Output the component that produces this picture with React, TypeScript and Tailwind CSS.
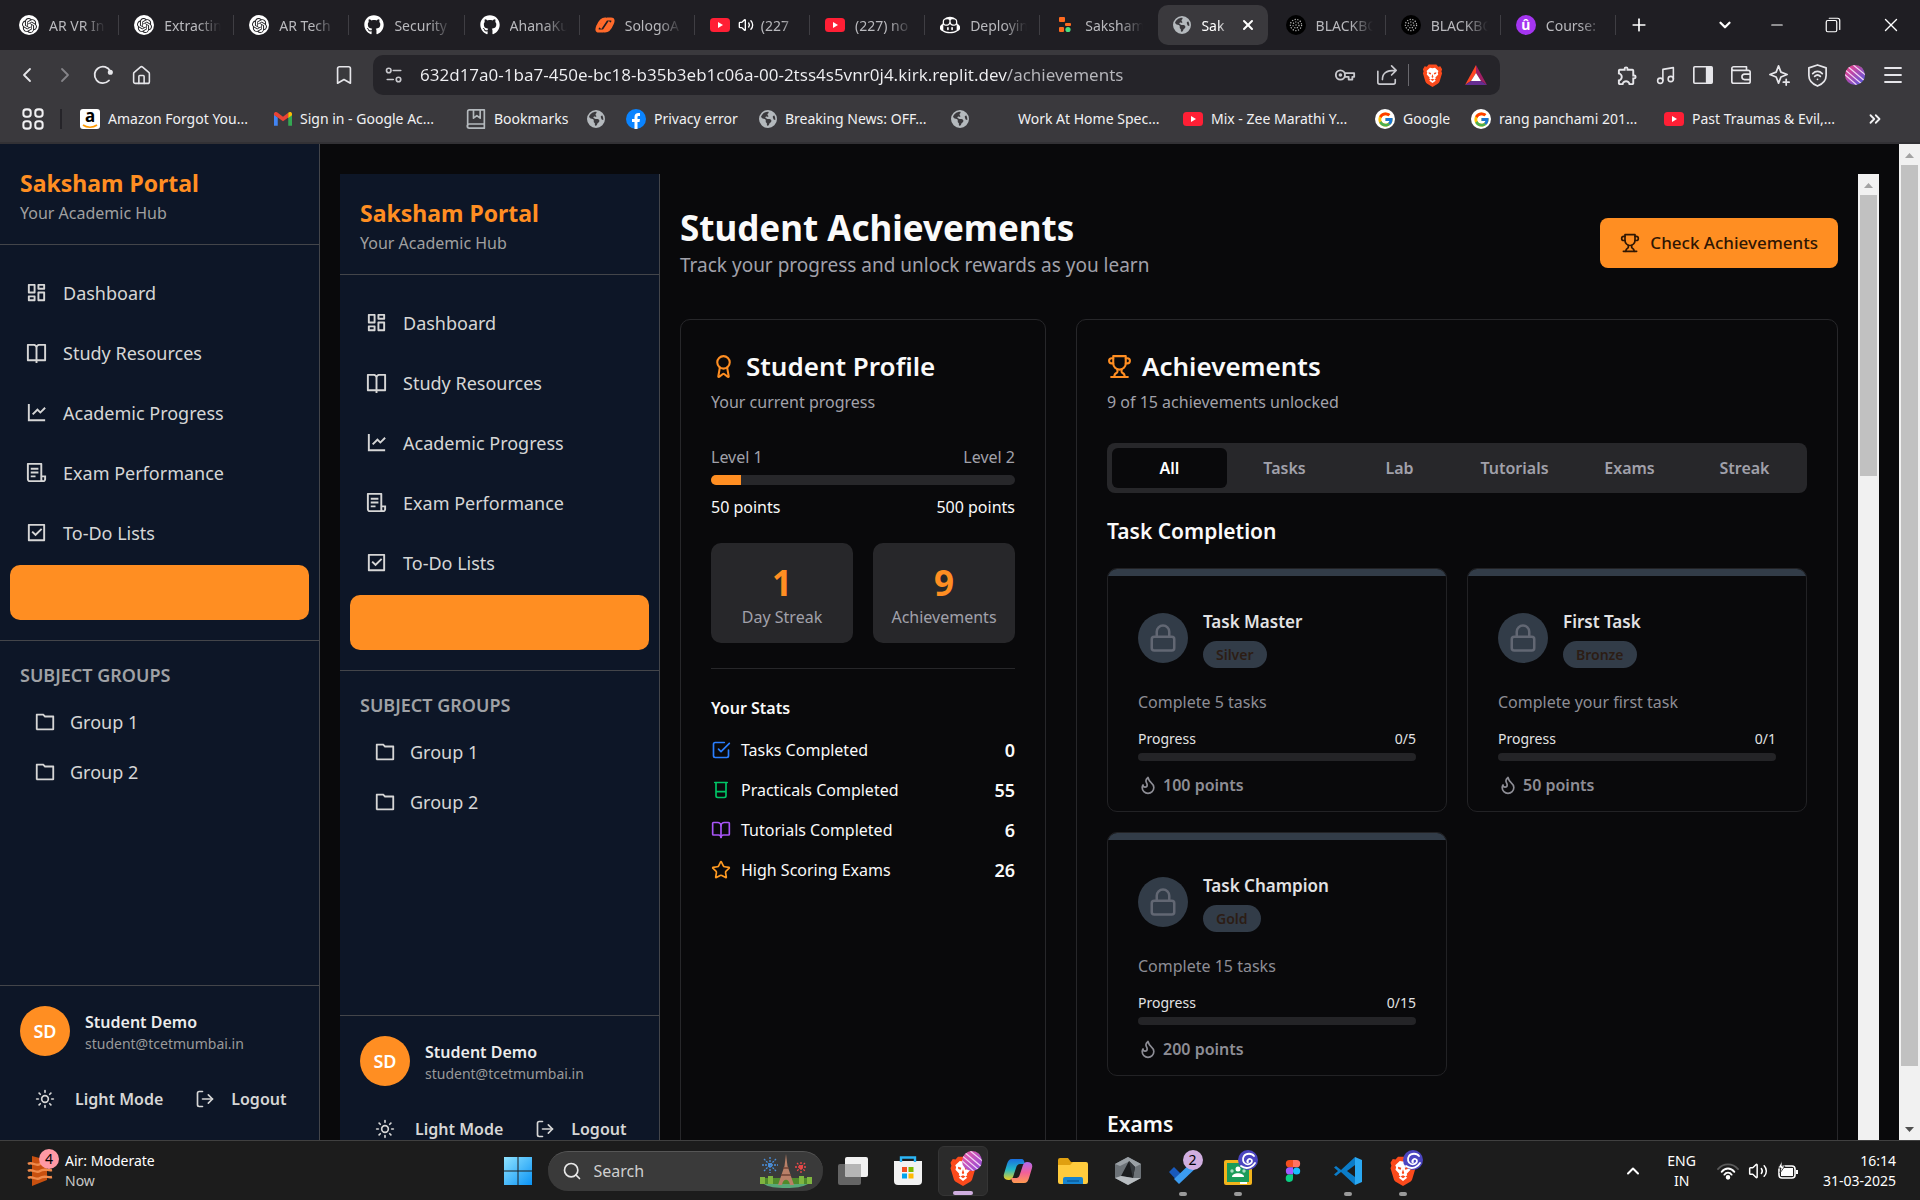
import React, { type ReactNode } from "react";
import { RiDashboardLine, RiBookOpenLine, RiLineChartLine, RiFileList3Line, RiCheckboxLine, RiFolderLine } from "react-icons/ri";
import { FaGithub, FaEarthAmericas } from "react-icons/fa6";
import { SiOpenai, SiGithubcopilot } from "react-icons/si";
import { FcGoogle } from "react-icons/fc";
import { MdOutlineExtension } from "react-icons/md";
import {
  Award, BookOpen, Star, Flame, Lock, Sun, LogOut, ChevronLeft, ChevronRight, ChevronDown, ChevronUp, ChevronsRight,
  Plus, X, Minus, Music, Menu, Search, Volume2, Bookmark, House,
} from "lucide-react";

/* ---------- shared drawings ---------- */

function Stroke({ size, className, width = 2, children }: { size: number; className?: string; width?: number; children: ReactNode }) {
  return (
    <svg width={size} height={size} viewBox="0 0 24 24" fill="none" stroke="currentColor" strokeWidth={width} strokeLinecap="round" strokeLinejoin="round" className={className} aria-hidden="true">
      {children}
    </svg>
  );
}

function TrophyIcon({ size, className }: { size: number; className?: string }) {
  return (
    <Stroke size={size} className={className}>
      <path d="M6 9H4.5a2.5 2.5 0 0 1 0-5H6" />
      <path d="M18 9h1.5a2.5 2.5 0 0 0 0-5H18" />
      <path d="M4 22h16" />
      <path d="M10 14.66V17c0 .55-.47.98-.97 1.21C7.85 18.75 7 20.24 7 22" />
      <path d="M14 14.66V17c0 .55.47.98.97 1.21C16.15 18.75 17 20.24 17 22" />
      <path d="M18 2H6v7a6 6 0 0 0 12 0V2Z" />
    </Stroke>
  );
}

function YouTubeIcon() {
  return (
    <svg width="20" height="20" viewBox="0 0 20 20" aria-hidden="true">
      <rect x="0" y="3" width="20" height="14" rx="3.5" fill="#ff1f35" />
      <path d="M8 7l5 3-5 3z" fill="#fff" />
    </svg>
  );
}

function ChatGptIcon() {
  return (
    <span className="flex size-5 items-center justify-center rounded-full bg-white text-[#202024]">
      <SiOpenai size={15} />
    </span>
  );
}

function BlackboxIcon() {
  return (
    <svg width="20" height="20" viewBox="0 0 20 20" aria-hidden="true">
      <circle cx="10" cy="10" r="10" fill="#000" />
      <circle cx="10" cy="10" r="5.6" fill="none" stroke="#bbb" strokeWidth="1.2" strokeDasharray="1.2 1.5" />
      <circle cx="10" cy="10" r="3" fill="none" stroke="#bbb" strokeWidth="1.2" strokeDasharray="1.2 1.4" />
      <circle cx="10" cy="10" r=".7" fill="#bbb" />
    </svg>
  );
}

function BraveLion({ size }: { size: number }) {
  return (
    <svg width={size} height={size} viewBox="0 0 24 24" aria-hidden="true">
      <path d="M8 .5h8l2 2.3 2.2-.4 1.8 3-.7 2.3.7 2-2.6 8.6c-.3 1-1 1.8-1.9 2.4L12 24l-5.500-3.300c-.9-.6-1.6-1.4-1.9-2.4L2 9.700l.7-2L2 5.400l1.800-3 2.200.4z" fill="#fb4a1c" />
      <path d="M12 4.400l2.600-.5 3.600 3.400-.7 1.600.5 2-3 3.200.4 1.200-1.400 1 1.400 1.100L12 19.900l-3.400-2.500 1.400-1.100-1.400-1 .4-1.200-3-3.200.5-2-.7-1.600 3.600-3.400z" fill="#fff" />
      <path d="M8 8.600l2.600.8-.4 1.500-2-.6zM16 8.600l-2.600.8.4 1.500 2-.6zM12 10.500l1 3-1 1-1-1zM10 16.300l2-.9 2 .9-2 1.500z" fill="#fb4a1c" />
    </svg>
  );
}

function StripedBall({ size, a, b, id }: { size: number; a: string; b: string; id: string }) {
  return (
    <svg width={size} height={size} viewBox="0 0 20 20" aria-hidden="true">
      <defs>
        <linearGradient id={id} x1="0" y1="0" x2="1" y2="1">
          <stop offset="0" stopColor={a} />
          <stop offset="1" stopColor={b} />
        </linearGradient>
        <clipPath id={id + "c"}><circle cx="10" cy="10" r="10" /></clipPath>
      </defs>
      <circle cx="10" cy="10" r="10" fill={`url(#${id})`} />
      <g clipPath={`url(#${id}c)`} stroke="#f3d5f5" strokeWidth="1.2">
        <path d="M-2 8l16 14M-2 3l20 17M1 0l20 17M7-1l16 13M13-1l10 8" />
      </g>
    </svg>
  );
}

function SwirlBall() {
  return (
    <svg width="20" height="20" viewBox="0 0 20 20" aria-hidden="true">
      <circle cx="10" cy="10" r="10" fill="#4b45c0" />
      <path d="M10 10c1-2 4-1 4 1s-3 4-6 3-4-5-2-8 8-3 10 0M3 16c4 3 10 3 14-3M10 10c-1 1-1 2 0 2" fill="none" stroke="#fff" strokeWidth="1.8" strokeLinecap="round" />
    </svg>
  );
}

function Globe() {
  return <FaEarthAmericas size={18} className="text-[#b4b9bd]" />;
}

/* ---------- browser window ---------- */

type Tab = { title: string; icon: ReactNode; active?: boolean; sound?: boolean };

const TABS: Tab[] = [
  { title: "AR VR In", icon: <ChatGptIcon /> },
  { title: "Extractin", icon: <ChatGptIcon /> },
  { title: "AR Tech", icon: <ChatGptIcon /> },
  { title: "Security", icon: <FaGithub size={20} className="text-white" /> },
  { title: "AhanaKu", icon: <FaGithub size={20} className="text-white" /> },
  {
    title: "SologoA",
    icon: (
      <svg width="20" height="20" viewBox="0 0 20 20" fill="none" stroke="#ff6a2b" strokeWidth="3.2" strokeLinejoin="round" aria-hidden="true">
        <path d="M8 16H4c-3 0-2-3-1-5 2-5 4-7 7-7h1L5 13" />
        <path d="M12 4h4c3 0 2 3 1 5-2 5-4 7-7 7H9l6-9" />
      </svg>
    ),
  },
  { title: "(227", icon: <YouTubeIcon />, sound: true },
  { title: "(227) no", icon: <YouTubeIcon /> },
  { title: "Deployin", icon: <SiGithubcopilot size={20} className="text-white" /> },
  {
    title: "Saksham",
    icon: (
      <svg width="20" height="20" viewBox="0 0 20 20" aria-hidden="true">
        <rect x="4" y="2" width="6" height="5" rx="1" fill="#ff6a1f" />
        <rect x="10" y="8" width="6" height="3" rx="1" fill="#ff6a1f" />
        <rect x="4" y="12" width="5" height="5" rx="1" fill="#ff6a1f" />
        <circle cx="13" cy="14.500" r="2.600" fill="#4ade80" />
      </svg>
    ),
  },
  { title: "Sak", icon: <Globe />, active: true },
  { title: "BLACKBO", icon: <BlackboxIcon /> },
  { title: "BLACKBO", icon: <BlackboxIcon /> },
  {
    title: "Course:",
    icon: <span className="flex size-5 items-center justify-center rounded-full bg-[#a435f0] text-[14px] font-bold leading-none text-white">û</span>,
  },
];

function TabStrip() {
  return (
    <div className="flex h-[50px] items-center bg-[#1f1e23] pl-1">
      <div className="flex min-w-0 flex-1 items-center" role="tablist">
        {TABS.map((t, i) => (
          <div key={i} className="flex min-w-0 flex-1 items-center">
            <button
              role="tab"
              aria-selected={!!t.active}
              className={
                t.active
                  ? "mx-[3px] flex h-10 min-w-0 flex-1 items-center rounded-[10px] bg-[#3a393d] pl-[15px] pr-3 text-white"
                  : "flex h-10 min-w-0 flex-1 items-center pl-[15px] pr-3 text-[#b9b9bd]"
              }
            >
              <span className="shrink-0">{t.icon}</span>
              {t.sound && <Volume2 size={16} className="ml-2 shrink-0 text-white" />}
              <span
                className={
                  t.sound
                    ? "ml-[7px] min-w-0 flex-1 overflow-hidden whitespace-nowrap text-left text-[14px] [mask-image:linear-gradient(to_right,black_60%,transparent)]"
                    : "ml-[10px] min-w-0 flex-1 overflow-hidden whitespace-nowrap text-left text-[14px] [mask-image:linear-gradient(to_right,black_60%,transparent)]"
                }
              >
                {t.title}
              </span>
              {t.active && <X size={16} strokeWidth={3} className="ml-[10px] shrink-0" />}
            </button>
            {!t.active && i !== 9 && <span className="h-5 w-px shrink-0 bg-[#3f3e43]" />}
          </div>
        ))}
      </div>
      <div className="flex w-[304px] shrink-0 items-center text-white">
        <button aria-label="New tab" className="flex w-[46px] justify-center"><Plus size={20} /></button>
        <span className="flex-1" />
        <button aria-label="Search tabs" className="flex w-[50px] justify-center"><ChevronDown size={18} strokeWidth={3} /></button>
        <button aria-label="Minimise" className="flex w-[54px] justify-center"><Minus size={18} strokeWidth={1.5} /></button>
        <button aria-label="Restore" className="flex w-[58px] justify-center">
          <Stroke size={18} width={1.6}>
            <rect x="3" y="6" width="14" height="15" rx="2" />
            <path d="M7 3h11a3 3 0 0 1 3 3v12" />
          </Stroke>
        </button>
        <button aria-label="Close" className="flex w-[58px] justify-center"><X size={22} strokeWidth={1.5} /></button>
      </div>
    </div>
  );
}

function ToolButton({ label, children }: { label: string; children: ReactNode }) {
  return <button aria-label={label} className="flex w-[38px] shrink-0 items-center justify-center">{children}</button>;
}

function Toolbar() {
  return (
    <div className="flex h-[50px] items-center bg-[#3a393d] pl-2 text-[#e6e6ea]">
      <ToolButton label="Back"><ChevronLeft size={24} strokeWidth={1.8} /></ToolButton>
      <ToolButton label="Forward"><ChevronRight size={24} strokeWidth={1.8} className="text-[#858489]" /></ToolButton>
      <ToolButton label="Reload">
        <Stroke size={22}>
          <path d="M18.500 18A9 9 0 1 1 20 8" />
          <circle cx="20" cy="9" r="1.800" fill="currentColor" />
        </Stroke>
      </ToolButton>
      <ToolButton label="Home"><House size={21} strokeWidth={1.8} /></ToolButton>
      <span className="w-[165px]" />
      <ToolButton label="Bookmark this tab"><Bookmark size={22} strokeWidth={1.8} /></ToolButton>
      <div className="ml-[10px] flex h-10 min-w-0 flex-1 items-center rounded-[10px] bg-[#252429] px-3">
        <Stroke size={18} className="shrink-0 text-[#c9c9ce]" width={2.2}>
          <circle cx="5" cy="6" r="3" />
          <path d="M11 6h10M3 18h8" />
          <circle cx="18" cy="18" r="3" />
        </Stroke>
        <input
          aria-label="Address"
          defaultValue="632d17a0-1ba7-450e-bc18-b35b3eb1c06a-00-2tss4s5vnr0j4.kirk.replit.dev/achievements"
          className="ml-[17px] min-w-0 flex-1 bg-[linear-gradient(to_right,#f0f0f3_587px,#b8b8bd_587px)] bg-clip-text text-[17px] leading-6 text-transparent outline-none"
        />
        <button aria-label="Passwords" className="text-[#c9c9ce]">
          <Stroke size={22}>
            <circle cx="7" cy="12" r="5" />
            <circle cx="7" cy="12" r="1" />
            <path d="M12 10h10v4h-2v3h-4v-3h-4" />
          </Stroke>
        </button>
        <button aria-label="Share" className="ml-5 text-[#c9c9ce]">
          <Stroke size={22} width={1.8}>
            <path d="M2 8v12a2 2 0 0 0 2 2h15a2 2 0 0 0 2-2v-3M7 17c0-7 4-10 14-10M17 2l5 5-5 5" />
          </Stroke>
        </button>
        <span className="ml-[10px] h-[22px] w-px bg-[#6a696e]" />
        <button aria-label="Shields" className="ml-3"><BraveLion size={23} /></button>
        <button aria-label="Rewards" className="ml-5">
          <svg width="24" height="24" viewBox="0 0 24 24" aria-hidden="true">
            <path d="M12 2L1 22l6-4 5-8z" fill="#ff4724" />
            <path d="M12 2l11 20-6-4-5-8z" fill="#9e1f63" />
            <path d="M1 22h22l-6-4H7z" fill="#662d91" />
            <path d="M12 10l5 8H7z" fill="#fff" />
          </svg>
        </button>
      </div>
      <span className="w-[108px]" />
      <ToolButton label="Extensions"><MdOutlineExtension size={23} /></ToolButton>
      <ToolButton label="Media"><Music size={21} strokeWidth={1.8} /></ToolButton>
      <ToolButton label="Sidebar">
        <Stroke size={22} width={1.8}>
          <rect x="2" y="3" width="20" height="18" rx="1" />
          <path d="M16 4h5v16h-5z" fill="currentColor" />
        </Stroke>
      </ToolButton>
      <ToolButton label="Wallet">
        <Stroke size={22} width={1.8}>
          <path d="M2 5a2 2 0 0 1 2-2h14v4H4a2 2 0 0 1-2-2v14a2 2 0 0 0 2 2h16a2 2 0 0 0 2-2v-2M22 11V9a2 2 0 0 0-2-2h-2M22 11h-6a3 3 0 0 0 0 6h6z" />
        </Stroke>
      </ToolButton>
      <ToolButton label="Assistant">
        <Stroke size={23} width={1.8}>
          <path d="M11 2l2.500 6.500L20 11l-6.500 2.500L11 20l-2.500-6.500L2 11l6.500-2.500zM19 16v6M16 19h6" />
        </Stroke>
      </ToolButton>
      <ToolButton label="VPN">
        <Stroke size={23} width={1.8}>
          <path d="M12 1l9 3v8c0 6-4 9-9 11-5-2-9-5-9-11V4zM7 10c3-3 7-3 10 0M9 13c2-2 4-2 6 0M12 16v0" />
        </Stroke>
      </ToolButton>
      <ToolButton label="Profile"><StripedBall id="profile" size={20} a="#ff3d81" b="#4a5be8" /></ToolButton>
      <ToolButton label="Menu"><Menu size={24} strokeWidth={1.8} /></ToolButton>
      <span className="w-2 shrink-0" />
    </div>
  );
}

const GoogleBadge = () => (
  <span className="flex size-5 items-center justify-center rounded-full bg-white"><FcGoogle size={17} /></span>
);

const BOOKMARKS: { title?: string; icon?: ReactNode; box: string }[] = [
  {
    title: "Amazon Forgot You...",
    box: "w-[194px]",
    icon: (
      <span className="relative flex size-5 items-start justify-center rounded-[3px] bg-white text-[17px] font-bold leading-[14px] text-black">
        a
        <svg width="16" height="5" viewBox="0 0 16 5" className="absolute bottom-0 left-0.5" aria-hidden="true">
          <path d="M1 1c4 3 10 3 14 0" fill="none" stroke="#ff9900" strokeWidth="1.6" />
        </svg>
      </span>
    ),
  },
  {
    title: "Sign in - Google Ac...",
    box: "w-[192px]",
    icon: (
      <svg width="18" height="18" viewBox="0 0 24 24" aria-hidden="true">
        <path d="M0 6v15h5V10z" fill="#4285f4" />
        <path d="M24 6v15h-5V10z" fill="#34a853" />
        <path d="M0 5c0-2 3-3 5-1.500l7 5.500 7-5.500v6.500l-7 5-7-5-5-3.500z" fill="#ea4335" />
        <path d="M19 3.500c2-1.500 5-.5 5 1.500v2l-5 3.500z" fill="#fbbc04" />
      </svg>
    ),
  },
  {
    title: "Bookmarks",
    box: "w-[121px]",
    icon: (
      <Stroke size={20} className="text-[#b4b9bd]">
        <path d="M2 21V3a2 2 0 0 1 2-2h18v22H4a2 2 0 0 1 0-5h18M9 1v10l4-3 4 3V1" />
      </Stroke>
    ),
  },
  { box: "w-[39px]", icon: <Globe /> },
  {
    title: "Privacy error",
    box: "w-[133px]",
    icon: (
      <svg width="20" height="20" viewBox="0 0 20 20" aria-hidden="true">
        <circle cx="10" cy="10" r="10" fill="#0a84ff" />
        <path d="M8.500 20v-7H6v-3h2.500V8c0-2.500 1.500-4 4-4H14v3h-1.200c-1 0-1.300.5-1.300 1.300V10H14l-.5 3h-2v7z" fill="#fff" />
      </svg>
    ),
  },
  { title: "Breaking News: OFF...", box: "w-[192px]", icon: <Globe /> },
  { box: "w-[67px]", icon: <Globe /> },
  { title: "Work At Home Spec...", box: "w-[165px]" },
  { title: "Mix - Zee Marathi Y...", box: "w-[192px]", icon: <YouTubeIcon /> },
  { title: "Google", box: "w-[96px]", icon: <GoogleBadge /> },
  { title: "rang panchami 201...", box: "w-[193px]", icon: <GoogleBadge /> },
  { title: "Past Traumas & Evil,...", box: "w-[190px]", icon: <YouTubeIcon /> },
];

function BookmarksBar() {
  return (
    <div className="flex h-11 items-center border-b-2 border-[#323135] bg-[#3a393d] pb-1 text-[14px] leading-5 text-[#f1f1f3]">
      <button aria-label="All bookmarks" className="ml-[22px]">
        <Stroke size={22} width={2.2}>
          <rect x="1.500" y="1.500" width="8" height="8" rx="3" />
          <rect x="14.500" y="1.500" width="8" height="8" rx="3" />
          <rect x="1.500" y="14.500" width="8" height="8" rx="3" />
          <rect x="14.500" y="14.500" width="8" height="8" rx="3" />
        </Stroke>
      </button>
      <span className="ml-4 mr-[18px] h-5 w-0.5 bg-[#252429]" />
      {BOOKMARKS.map((b, i) => (
        <div key={i} className={`${b.box} shrink-0`}>
          <a href="#" aria-label={b.title ?? "Untitled bookmark"} className="flex items-center gap-2 whitespace-nowrap">
            {b.icon && <span className="shrink-0">{b.icon}</span>}
            {b.title && <span>{b.title}</span>}
          </a>
        </div>
      ))}
      <button aria-label="More bookmarks" className="ml-3"><ChevronsRight size={18} strokeWidth={2.4} /></button>
    </div>
  );
}

/* ---------- portal ---------- */

const NAV = [
  { label: "Dashboard", Icon: RiDashboardLine },
  { label: "Study Resources", Icon: RiBookOpenLine },
  { label: "Academic Progress", Icon: RiLineChartLine },
  { label: "Exam Performance", Icon: RiFileList3Line },
  { label: "To-Do Lists", Icon: RiCheckboxLine },
];

function Sidebar() {
  return (
    <aside className="flex h-full w-80 shrink-0 flex-col border-r border-[#43454a] bg-[#0d1627] text-[#d6d6d6]">
      <div className="border-b border-[#43454a] px-5 pb-[18px] pt-[22px]">
        <h1 className="text-[23px] font-bold leading-[35px] text-[#ff8e22]">Saksham Portal</h1>
        <p className="text-[16px] leading-[25px] text-[#a0a0a0]">Your Academic Hub</p>
      </div>
      <nav className="flex flex-col gap-[5px] border-b border-[#43454a] px-[10px] py-5">
        {NAV.map(({ label, Icon }) => (
          <a key={label} href="#" className="flex h-[55px] items-center gap-[15px] pl-[15px] text-[18px] leading-7">
            <Icon size={23} className="shrink-0" />
            {label}
          </a>
        ))}
        <a href="#" aria-label="Achievements" aria-current="page" className="h-[55px] rounded-[10px] bg-[#ff8e22]" />
      </nav>
      <div className="flex-1 px-5 pt-5">
        <h2 className="text-[18px] font-semibold leading-7 text-[#9fa1a5]">SUBJECT GROUPS</h2>
        <div className="mt-2">
          {["Group 1", "Group 2"].map((g) => (
            <a key={g} href="#" className="flex h-[50px] items-center gap-[14px] pl-[14px] text-[18px]">
              <RiFolderLine size={22} />
              {g}
            </a>
          ))}
        </div>
      </div>
      <div className="border-t border-[#43454a] px-5 pb-[19px] pt-5">
        <div className="flex items-center gap-[15px]">
          <span className="flex size-[50px] items-center justify-center rounded-full bg-[#ff8e22] text-[18px] font-semibold text-white">SD</span>
          <div className="pt-0.5">
            <p className="text-[16px] font-semibold leading-6 text-[#ececec]">Student Demo</p>
            <p className="text-[14px] leading-5 text-[#9a9a9a]">student@tcetmumbai.in</p>
          </div>
        </div>
        <div className="mt-5 flex h-[45px] items-center pl-[15px] text-[16px] font-semibold">
          <button className="flex items-center gap-5"><Sun size={20} />Light Mode</button>
          <button className="ml-8 flex items-center gap-4"><LogOut size={20} />Logout</button>
        </div>
      </div>
    </aside>
  );
}

const STATS = [
  {
    label: "Tasks Completed",
    value: 0,
    icon: (
      <Stroke size={20} className="text-[#2b7fff]">
        <path d="m9 11 3 3L22 4" />
        <path d="M21 12v7a2 2 0 0 1-2 2H5a2 2 0 0 1-2-2V5a2 2 0 0 1 2-2h11" />
      </Stroke>
    ),
  },
  {
    label: "Practicals Completed",
    value: 55,
    icon: (
      <Stroke size={20} className="text-[#00c566]">
        <path d="M4.500 3h15M6 3v16a2 2 0 0 0 2 2h8a2 2 0 0 0 2-2V3M6 14h12" />
      </Stroke>
    ),
  },
  { label: "Tutorials Completed", value: 6, icon: <BookOpen size={20} className="text-[#a855f7]" /> },
  { label: "High Scoring Exams", value: 26, icon: <Star size={20} className="text-[#ff9a22]" /> },
];

function ProfileCard() {
  return (
    <section className="rounded-[10px] border border-[#27272a] p-[30px] text-[16px] leading-6">
      <h2 className="flex items-center gap-[10px] text-[26px] font-semibold leading-8">
        <Award size={25} className="text-[#ff8e22]" />
        Student Profile
      </h2>
      <p className="mt-2 text-[#a1a1aa]">Your current progress</p>
      <div className="mt-[31px] flex justify-between text-[#a1a1aa]"><span>Level 1</span><span>Level 2</span></div>
      <div className="mt-1.5 h-[10px] overflow-hidden rounded-full bg-[#27272a]">
        <div className="h-full w-1/10 bg-[#ff8e22]" />
      </div>
      <div className="mt-[10px] flex justify-between"><span>50 points</span><span>500 points</span></div>
      <div className="mt-6 grid grid-cols-2 gap-5 text-center">
        {[["1", "Day Streak"], ["9", "Achievements"]].map(([n, label]) => (
          <div key={label} className="h-[100px] rounded-[10px] bg-[#27272a] pt-5">
            <p className="text-[35px] font-bold leading-10 text-[#ff8e22]">{n}</p>
            <p className="leading-7 text-[#a1a1aa]">{label}</p>
          </div>
        ))}
      </div>
      <hr className="mt-[25px] border-[#27272a]" />
      <h3 className="mt-[27px] font-semibold">Your Stats</h3>
      <ul className="mt-[18px] flex flex-col gap-4">
        {STATS.map((s) => (
          <li key={s.label} className="flex items-center gap-[10px]">
            {s.icon}
            <span className="flex-1">{s.label}</span>
            <span className="text-[18px] font-semibold">{s.value}</span>
          </li>
        ))}
      </ul>
    </section>
  );
}

const TASKS = [
  { title: "Task Master", tier: "Silver", text: "Complete 5 tasks", progress: "0/5", points: 100 },
  { title: "First Task", tier: "Bronze", text: "Complete your first task", progress: "0/1", points: 50 },
  { title: "Task Champion", tier: "Gold", text: "Complete 15 tasks", progress: "0/15", points: 200 },
];

function AchievementCard({ title, tier, text, progress, points }: (typeof TASKS)[number]) {
  return (
    <article className="overflow-hidden rounded-[10px] border border-[#222225]">
      <div className="h-[7px] bg-[#323c48]" />
      <div className="px-[30px] pb-[14px] pt-8">
        <div className="flex items-center gap-[15px]">
          <span className="flex size-[50px] items-center justify-center rounded-full bg-[#323c48] text-[#626773]">
            <Lock size={30} />
          </span>
          <div>
            <h4 className="text-[17px] font-semibold leading-7 text-[#e2e2e3]">{title}</h4>
            <span className="mt-[5px] flex h-[27px] w-fit items-center rounded-full bg-[#323c48] px-[13px] text-[14px] font-semibold text-[#2c1d15]">{tier}</span>
          </div>
        </div>
        <p className="mt-[22px] text-[16px] leading-6 text-[#8d8d95]">{text}</p>
        <div className="mt-[15px] flex justify-between text-[14px] leading-5 text-[#e2e2e3]"><span>Progress</span><span>{progress}</span></div>
        <div className="mt-1 h-2 rounded-full bg-[#242427]" />
        <p className="mt-3 flex items-center gap-[5px] text-[16px] font-semibold leading-6 text-[#8d8d95]"><Flame size={20} />{points} points</p>
      </div>
    </article>
  );
}

function AchievementsCard() {
  return (
    <section className="col-span-2 rounded-[10px] border border-[#27272a] p-[30px]">
      <h2 className="flex items-center gap-[10px] text-[26px] font-semibold leading-8">
        <TrophyIcon size={25} className="text-[#ff8e22]" />
        Achievements
      </h2>
      <p className="mt-2 text-[16px] leading-6 text-[#a1a1aa]">9 of 15 achievements unlocked</p>
      <div role="tablist" className="mt-[29px] grid h-[50px] grid-cols-6 rounded-lg bg-[#27272a] p-[5px] text-[16px] font-semibold text-[#a1a1aa]">
        {["All", "Tasks", "Lab", "Tutorials", "Exams", "Streak"].map((t, i) => (
          <button key={t} role="tab" aria-selected={i === 0} className={i === 0 ? "rounded-md bg-[#09090b] text-white" : "rounded-md"}>{t}</button>
        ))}
      </div>
      <h3 className="mt-6 text-[21px] font-semibold leading-7">Task Completion</h3>
      <div className="mt-[23px] grid grid-cols-2 gap-5">
        {TASKS.map((t) => <AchievementCard key={t.title} {...t} />)}
      </div>
      <h3 className="mt-[34px] text-[21px] font-semibold leading-7">Exams</h3>
    </section>
  );
}

function ScrollBar({ thumb, end }: { thumb: string; end?: boolean }) {
  return (
    <div className="flex h-full w-[21px] shrink-0 flex-col items-center bg-[#f1f1f1]" aria-hidden="true">
      <svg width="21" height="21" viewBox="0 0 21 21" className="shrink-0"><path d="M6 14h9l-4.500-5z" fill="#a3a3a3" /></svg>
      <div className={`${thumb} w-[17px] bg-[#c1c1c1]`} />
      {end && (
        <>
          <span className="flex-1" />
          <svg width="21" height="21" viewBox="0 0 21 21" className="shrink-0"><path d="M6 8h9l-4.500 5z" fill="#505050" /></svg>
        </>
      )}
    </div>
  );
}

function Portal() {
  return (
    <div className="flex min-h-0 flex-1 overflow-hidden bg-[#09090b] text-[#fafafa]">
      <Sidebar />
      <div className="h-full min-w-0 flex-1 overflow-hidden px-5">
        <div className="mt-[30px] flex h-full overflow-hidden">
          <Sidebar />
          <main className="min-w-0 flex-1 px-5 pt-[31px]">
            <header className="mb-[39px] flex items-center justify-between">
              <div>
                <h1 className="text-[35px] font-bold leading-[45px]">Student Achievements</h1>
                <p className="text-[19px] leading-[30px] text-[#a1a1aa]">Track your progress and unlock rewards as you learn</p>
              </div>
              <button className="flex h-[50px] items-center gap-[10px] rounded-lg bg-[#ff8e22] px-5 text-[17px] font-medium text-[#2f1604]">
                <TrophyIcon size={20} />
                Check Achievements
              </button>
            </header>
            <div className="grid grid-cols-3 gap-[30px]">
              <ProfileCard />
              <AchievementsCard />
            </div>
          </main>
          <ScrollBar thumb="h-[281px]" />
        </div>
      </div>
      <ScrollBar thumb="h-[901px]" end />
    </div>
  );
}

/* ---------- taskbar ---------- */

function TaskButton({ label, active, running, badge, children }: { label: string; active?: boolean; running?: boolean; badge?: ReactNode; children: ReactNode }) {
  return (
    <button
      aria-label={label}
      className={active ? "relative flex size-[50px] items-center justify-center rounded-md border border-[#353535] bg-[#2b2b2b]" : "relative flex size-[50px] items-center justify-center"}
    >
      {children}
      {badge && <span className="absolute right-[5px] top-1">{badge}</span>}
      {active && <span className="absolute bottom-0 h-1 w-5 rounded-full bg-[#d0aee0]" />}
      {running && <span className="absolute bottom-0 h-1 w-2 rounded-full bg-[#9a9a9a]" />}
    </button>
  );
}

function Taskbar() {
  return (
    <footer className="grid h-[60px] shrink-0 grid-cols-[1fr_auto_1fr] items-center border-t border-[#404040] bg-[#1c1c1c] text-white">
      <button className="flex items-center gap-3 pl-[27px] text-left text-[14px] leading-5">
        <span className="relative">
          <svg width="26" height="32" viewBox="0 0 26 32" aria-hidden="true">
            <path d="M5 1l15 4v20L5 31z" fill="#c8500f" />
            <path d="M1 9c4-3 8 3 12 0s8 0 12-1M1 16c4-3 8 3 12 0s8 0 12-1M1 23c4-3 8 3 12 0s8 0 12-1" fill="none" stroke="#f08a4b" strokeWidth="2.400" />
          </svg>
          <span className="absolute -top-1.5 left-3 flex size-5 items-center justify-center rounded-full bg-[#ff99a4] text-[14px] leading-none text-black">4</span>
        </span>
        <span>Air: Moderate<br /><span className="text-[#c8c8c8]">Now</span></span>
      </button>
      <div className="flex items-center gap-[5px]">
        <TaskButton label="Start">
          <svg width="30" height="30" viewBox="0 0 30 30" aria-hidden="true">
            <defs>
              <linearGradient id="win" x1="0" y1="0" x2="1" y2="1"><stop offset="0" stopColor="#8fe3ff" /><stop offset="1" stopColor="#0a93f5" /></linearGradient>
            </defs>
            <path d="M1 1h13.500v13.500H1zM15.500 1H29v13.500H15.500zM1 15.500h13.500V29H1zM15.500 15.500H29V29H15.500z" fill="url(#win)" />
          </svg>
        </TaskButton>
        <div className="flex h-10 w-[275px] items-center rounded-full border-t border-[#565656] bg-[#3a3a3a] pl-[14px] pr-[10px]">
          <Search size={20} className="shrink-0 text-[#e8e8e8]" />
          <input aria-label="Search" placeholder="Search" className="ml-3 min-w-0 flex-1 bg-transparent text-[16px] placeholder:text-[#d0d0d0]" />
          <svg width="54" height="34" viewBox="0 0 54 34" aria-hidden="true">
            <rect x="1" y="24" width="52" height="6" rx="1" fill="#4f8a2c" />
            <path d="M1 23h5v7H1zM9 22h5v8H9zM40 22h5v8h-5zM48 23h5v7h-5z" fill="#7fb540" />
            <path d="M5 30h44c-6 3-12 4-22 4S9 33 5 30z" fill="#58a878" />
            <path d="M27 0l1.500 12L35 31h-4c-1-7-7-7-8 0h-4l6.500-19z" fill="#b98068" />
            <path d="M24 14h6M22 21h10" stroke="#704334" strokeWidth="1.500" />
            <path d="M11 3v16M3 11h16M5 5l12 12M17 5L5 17" stroke="#4a8fdc" strokeWidth="1.300" strokeDasharray="2 1" />
            <path d="M42 8v11M36 13h12M38 9l8 8M46 9l-8 8" stroke="#f04848" strokeWidth="1.300" strokeDasharray="2 1" />
          </svg>
        </div>
        <TaskButton label="Task view">
          <svg width="30" height="30" viewBox="0 0 30 30" aria-hidden="true">
            <rect x="0" y="8" width="23" height="21" rx="2" fill="#646464" />
            <rect x="7" y="1" width="23" height="20" rx="2" fill="#f1f1f1" />
            <path d="M7 8h16v13H9a2 2 0 0 1-2-2z" fill="#b5b5b5" />
          </svg>
        </TaskButton>
        <TaskButton label="Microsoft Store">
          <svg width="30" height="30" viewBox="0 0 30 30" aria-hidden="true">
            <path d="M1 5h28v20a4 4 0 0 1-4 4H5a4 4 0 0 1-4-4z" fill="#f2f2f2" />
            <path d="M8 6V1.500h14V6" fill="none" stroke="#2bb5f5" strokeWidth="2.400" />
            <path d="M9 11h5v5H9z" fill="#f25022" /><path d="M15.500 11h5v5h-5z" fill="#7fba00" />
            <path d="M9 17.500h5v5H9z" fill="#00a4ef" /><path d="M15.500 17.500h5v5h-5z" fill="#ffb900" />
          </svg>
        </TaskButton>
        <TaskButton label="Brave" active badge={<StripedBall id="b1" size={20} a="#f05aa0" b="#8a4ae0" />}><BraveLion size={30} /></TaskButton>
        <TaskButton label="Copilot">
          <svg width="30" height="30" viewBox="0 0 30 30" aria-hidden="true">
            <defs>
              <linearGradient id="cpa" x1="0" y1="0" x2="0" y2="1"><stop offset="0" stopColor="#1a6fe0" /><stop offset=".5" stopColor="#22b8c8" /><stop offset="1" stopColor="#f0d020" /></linearGradient>
              <linearGradient id="cpb" x1="0" y1="0" x2="0" y2="1"><stop offset="0" stopColor="#b06af0" /><stop offset=".5" stopColor="#f2609a" /><stop offset="1" stopColor="#ff9a50" /></linearGradient>
            </defs>
            <path d="M9 3h9c3 0 3 2 4 5h-5c-2 0-3 1-4 4l-3 9c-1 2-2 3-4 3-4 0-6-2-5-6L4 8c1-3 2-5 5-5z" fill="url(#cpa)" />
            <path d="M21 27h-9c-3 0-3-2-4-5h5c2 0 3-1 4-4l3-9c1-2 2-3 4-3 4 0 6 2 5 6l-3 10c-1 3-2 5-5 5z" fill="url(#cpb)" />
          </svg>
        </TaskButton>
        <TaskButton label="File Explorer">
          <svg width="30" height="28" viewBox="0 0 30 28" aria-hidden="true">
            <path d="M0 3a2 2 0 0 1 2-2h8l3 4h15v8H0z" fill="#e0a010" />
            <path d="M0 8h12l3-3h13a2 2 0 0 1 2 2v18a2 2 0 0 1-2 2H2a2 2 0 0 1-2-2z" fill="#ffcb3d" />
            <path d="M5 22a2 2 0 0 1 2-2h16a2 2 0 0 1 2 2v5H5z" fill="#1583d0" />
            <path d="M9 24h12" stroke="#0b5c9c" strokeWidth="1.500" />
          </svg>
        </TaskButton>
        <TaskButton label="Cursor">
          <svg width="28" height="30" viewBox="0 0 28 30" aria-hidden="true">
            <path d="M14 1l13 7v14l-13 7-13-7V8z" fill="#6c7277" />
            <path d="M14 1l13 7-6 3-7-5-8 4-5-2z" fill="#9aa0a5" />
            <path d="M15 5l6 6-2 11-12-2z" fill="#1b1d1f" />
            <path d="M15 5l6 6-2 11z" fill="#34383c" />
            <path d="M1 22l6-2 12 2 8 0-13 7z" fill="#b8bdc1" />
          </svg>
        </TaskButton>
        <TaskButton label="To Do" running badge={<span className="flex size-5 items-center justify-center rounded-full bg-[#d0aee0] text-[14px] leading-none text-black">2</span>}>
          <svg width="30" height="26" viewBox="0 0 30 26" className="mt-1" aria-hidden="true">
            <path d="M1 12l5-5 10 10-5 6z" fill="#185abd" />
            <path d="M24 2l5 5-18 17-5-5z" fill="#3c9cf0" />
          </svg>
        </TaskButton>
        <TaskButton label="Classroom" running badge={<SwirlBall />}>
          <svg width="30" height="28" viewBox="0 0 30 28" className="mt-1" aria-hidden="true">
            <rect x="1" y="1" width="28" height="25" rx="2" fill="#f2b41c" />
            <rect x="4" y="4" width="22" height="19" fill="#1a9c5a" />
            <circle cx="15" cy="10" r="2.500" fill="#fff" /><circle cx="9" cy="12" r="1.700" fill="#a8dcc0" /><circle cx="21" cy="12" r="1.700" fill="#a8dcc0" />
            <path d="M9 18c0-5 12-5 12 0z" fill="#fff" /><path d="M17 23h7v2h-7z" fill="#fff" />
          </svg>
        </TaskButton>
        <TaskButton label="Figma">
          <svg width="16" height="22" viewBox="0 0 16 22" aria-hidden="true">
            <path d="M4.500 0H8v7.300H4.500a3.650 3.650 0 0 1 0-7.300z" fill="#f24e1e" />
            <path d="M8 0h3.500a3.650 3.650 0 0 1 0 7.300H8z" fill="#ff7262" />
            <path d="M4.500 7.300H8v7.300H4.500a3.650 3.650 0 0 1 0-7.300z" fill="#a259ff" />
            <circle cx="11.600" cy="11" r="3.600" fill="#1abcfe" />
            <path d="M4.500 14.600H8v3.700a3.650 3.650 0 1 1-3.500-3.700z" fill="#0acf83" />
          </svg>
        </TaskButton>
        <TaskButton label="Visual Studio Code" running>
          <svg width="30" height="30" viewBox="0 0 30 30" aria-hidden="true">
            <path d="M22 1L8 14 3 10 1 11.500 5 15l-4 3.500L3 20l5-4 14 13z" fill="#0b7cc8" />
            <path d="M22 1l7 3v22l-7 3z" fill="#2aa8f2" />
            <path d="M22 9v12l-8-6z" fill="#1c1c1c" />
          </svg>
        </TaskButton>
        <TaskButton label="Brave profile" running badge={<SwirlBall />}><BraveLion size={30} /></TaskButton>
      </div>
      <div className="flex items-center justify-end pr-6 text-[14px] leading-5">
        <button aria-label="Show hidden icons"><ChevronUp size={20} strokeWidth={2.4} /></button>
        <div className="ml-6 text-center">ENG<br />IN</div>
        <svg width="22" height="20" viewBox="0 0 24 22" fill="none" stroke="#fff" strokeWidth="2" strokeLinecap="round" className="ml-[21px]" aria-hidden="true">
          <path d="M1 9C7 2 17 2 23 9" stroke="#5a5a5a" />
          <path d="M5 12c4-5 10-5 14 0M8 15c2-3 6-3 8 0" />
          <circle cx="12" cy="18" r="1.500" fill="#fff" />
        </svg>
        <Volume2 size={20} strokeWidth={1.8} className="ml-[9px]" />
        <svg width="22" height="20" viewBox="0 0 22 20" className="ml-[9px]" aria-hidden="true">
          <rect x="2" y="5" width="16" height="12" rx="3" fill="none" stroke="#fff" strokeWidth="1.600" />
          <path d="M4 7h12v8H4z" fill="#fff" /><rect x="19" y="9" width="2" height="4" fill="#fff" />
          <path d="M5 0L1 7h3l-1 5 5-7H5z" fill="#fff" stroke="#1c1c1c" strokeWidth=".8" />
        </svg>
        <div className="ml-6 text-right">16:14<br />31-03-2025</div>
      </div>
    </footer>
  );
}

export default function App() {
  return (
    <div className="flex h-screen flex-col overflow-hidden bg-[#1c1c1c] font-['Noto_Sans',sans-serif]">
      <TabStrip />
      <Toolbar />
      <BookmarksBar />
      <Portal />
      <Taskbar />
    </div>
  );
}
